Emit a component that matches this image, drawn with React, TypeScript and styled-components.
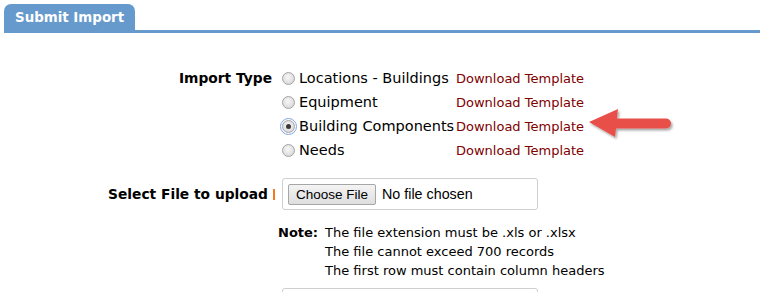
import React from 'react';
import styled, { createGlobalStyle } from 'styled-components';

const GlobalStyle = createGlobalStyle`
  body {
    margin: 0;
    background: #fff;
    color: #000;
    font-family: "DejaVu Sans", Verdana, sans-serif;
    font-size: 13px;
  }
`;

const Page = styled.div`
  width: 760px;
  height: 292px;
  overflow: hidden;
`;

const TabBar = styled.div`
  display: flex;
  margin: 4px 0 0 4px;
  border-bottom: 3px solid #6699cc;
`;

const Tab = styled.div`
  width: 131px;
  height: 26px;
  box-sizing: border-box;
  padding-left: 11px;
  background: #6699cc;
  border-radius: 7px 7px 0 0;
  color: #fff;
  font-weight: bold;
  font-size: 13.4px;
  line-height: 27px;
`;

const Form = styled.div`
  display: grid;
  grid-template-columns: 276px 1fr;
  column-gap: 6px;
  margin-top: 33px;
`;

const Label = styled.div<{ required?: boolean; top?: string }>`
  display: flex;
  justify-content: flex-end;
  align-items: center;
  height: 24px;
  margin-top: ${({ top }) => top || '0'};
  padding-right: ${({ required }) => (required ? '1px' : '4px')};
  font-weight: bold;
  font-size: 13.8px;
  white-space: nowrap;

  &::after {
    content: "";
    display: ${({ required }) => (required ? 'block' : 'none')};
    width: 2px;
    height: 11px;
    margin-left: 5px;
    background: #f47a20;
  }
`;

const Field = styled.div<{ top?: string }>`
  margin-top: ${({ top }) => top || '0'};
`;

const RadioList = styled.div`
  display: grid;
  grid-template-columns: 174px auto;
  grid-auto-rows: 24px;
  align-items: center;
  width: max-content;
`;

const Option = styled.label`
  display: flex;
  align-items: center;
  gap: 4px;
  white-space: nowrap;
  font-size: 14.5px;
  cursor: pointer;
`;

const Radio = styled.span<{ checked?: boolean }>`
  position: relative;
  flex: none;
  width: 13px;
  height: 13px;
  box-sizing: border-box;
  border-radius: 50%;
  border: 1px solid #a4a4a4;
  background: radial-gradient(circle at 45% 40%, #f7f7f7 0%, #e2e2e2 55%, #cfcfcf 100%);
  outline: ${({ checked }) => (checked ? '1px solid #7fa6e8' : 'none')};
  outline-offset: 1px;

  &::after {
    content: "";
    display: ${({ checked }) => (checked ? 'block' : 'none')};
    position: absolute;
    left: 3px;
    top: 3px;
    width: 5px;
    height: 5px;
    border-radius: 50%;
    background: #3a3a3a;
  }
`;

const LinkCell = styled.span`
  position: relative;
  display: inline-block;
`;

const TemplateLink = styled.a`
  color: #800000;
  text-decoration: none;
  white-space: nowrap;
`;

const Callout = styled.svg`
  position: absolute;
  left: calc(100% + 3px);
  top: -12px;
  overflow: visible;
`;

const FileBox = styled.div`
  display: flex;
  align-items: center;
  gap: 6px;
  width: 256px;
  height: 32px;
  box-sizing: border-box;
  padding: 0 5px;
  border: 1px solid #cfcfcf;
  border-radius: 3px;
  font-family: "Liberation Sans", Arial, sans-serif;
  font-size: 14.3px;
`;

const ChooseButton = styled.button`
  height: 21px;
  padding: 0 7px;
  border: 1px solid #a6a6a6;
  border-radius: 2px;
  background: linear-gradient(#f4f4f4, #dedede);
  color: #000;
  font-family: "Liberation Sans", Arial, sans-serif;
  font-size: 13.5px;
`;

const Note = styled.div`
  display: grid;
  grid-template-columns: auto 1fr;
  column-gap: 7px;
  margin: 13px 0 0 -4px;
  line-height: 19px;
`;

const NoteTitle = styled.span`
  font-weight: bold;
`;

const NoteLines = styled.div`
  display: flex;
  flex-direction: column;
  white-space: nowrap;
`;

const NextBox = styled.div`
  width: 256px;
  height: 32px;
  box-sizing: border-box;
  margin-top: 8px;
  border: 1px solid #cfcfcf;
  border-radius: 3px;
`;

const importTypes = [
  'Locations - Buildings',
  'Equipment',
  'Building Components',
  'Needs',
];

const ArrowMark = () => (
  <Callout width="88" height="36" viewBox="0 0 88 36">
    <defs>
      <filter id="sh" x="-10%" y="-20%" width="130%" height="160%">
        <feDropShadow dx="1.5" dy="2" stdDeviation="1.2" floodColor="#000" floodOpacity="0.35" />
      </filter>
    </defs>
    <path
      d="M2 15 L31 2 L30 11.5 L79 11.5 A5 5 0 0 1 79 21.5 L29 21.5 L28 30 Z"
      fill="#e8504a"
      filter="url(#sh)"
    />
  </Callout>
);

export default function App() {
  return (
    <Page>
      <GlobalStyle />
      <TabBar>
        <Tab>Submit Import</Tab>
      </TabBar>
      <Form>
        <Label>Import Type</Label>
        <Field>
          <RadioList>
            {importTypes.map((name, i) => (
              <React.Fragment key={name}>
                <Option>
                  <Radio checked={i === 2} />
                  {name}
                </Option>
                <LinkCell>
                  <TemplateLink href="#">Download Template</TemplateLink>
                  {i === 2 && <ArrowMark />}
                </LinkCell>
              </React.Fragment>
            ))}
          </RadioList>
        </Field>

        <Label required top="20px">Select File to upload</Label>
        <Field top="16px">
          <FileBox>
            <ChooseButton>Choose File</ChooseButton>
            No file chosen
          </FileBox>
        </Field>

        <div />
        <Field>
          <Note>
            <NoteTitle>Note:</NoteTitle>
            <NoteLines>
              <span>The file extension must be .xls or .xlsx</span>
              <span>The file cannot exceed 700 records</span>
              <span>The first row must contain column headers</span>
            </NoteLines>
          </Note>
          <NextBox />
        </Field>
      </Form>
    </Page>
  );
}
